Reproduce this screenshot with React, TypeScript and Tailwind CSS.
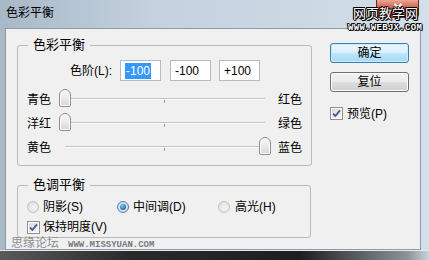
import React from "react";

const outline =
  "[text-shadow:1px_0_0_#000,-1px_0_0_#000,0_1px_0_#000,0_-1px_0_#000,1px_1px_0_#000,-1px_-1px_0_#000]";

function Slider({ left, right, end }: { left: string; right: string; end?: boolean }) {
  return (
    <div className="flex h-[24px] items-center">
      <span className="w-[24px] shrink-0 whitespace-nowrap text-[12px] leading-none">{left}</span>
      <div className="relative ml-[8px] h-[24px] w-[212px] shrink-0">
        <div className="absolute left-[6px] right-[6px] top-[10px] h-px bg-[#c4c4c4] shadow-[0_1px_0_#ffffff]" />
        <div className="absolute left-[105px] top-[12px] h-[3px] w-px bg-[#9c9c9c]" />
        <div
          className={`absolute top-[1px] h-[18px] w-[12px] rounded-t-[6px] rounded-b-[2px] border border-[#8e8f8f] bg-[linear-gradient(180deg,#fbfbfb,#e6e6e6_60%,#d6d6d6)] shadow-[inset_0_0_0_1px_#ffffff] ${
            end ? "right-0" : "left-0"
          }`}
        />
      </div>
      <span className="ml-[7px] shrink-0 whitespace-nowrap text-[12px] leading-none">{right}</span>
    </div>
  );
}

function Check() {
  return (
    <span className="flex h-[13px] w-[13px] shrink-0 items-center justify-center border border-[#8e8f8f] bg-white p-px">
      <span className="flex h-full w-full items-center justify-center bg-[linear-gradient(135deg,#d9dadb,#f6f6f6)]">
        <svg width="9" height="9" viewBox="0 0 9 9">
          <path d="M1 4.6 L3.4 7 L8 1.4" stroke="#3f5a8e" strokeWidth="1.8" fill="none" />
        </svg>
      </span>
    </span>
  );
}

function Radio({ on }: { on?: boolean }) {
  return (
    <span
      className={`flex h-[12px] w-[12px] shrink-0 items-center justify-center rounded-full border ${
        on
          ? "border-[#5a7fa6] bg-[radial-gradient(circle,#e6eef6,#c9d6e3)]"
          : "border-[#c2c2c2] bg-[radial-gradient(circle_at_60%_60%,#f4f4f4,#dadada)]"
      }`}
    >
      {on && (
        <span className="h-[6px] w-[6px] rounded-full bg-[radial-gradient(circle_at_40%_35%,#8fd0f4,#1f79b8_60%,#0d4e86)]" />
      )}
    </span>
  );
}

function Field({ value, selected }: { value: string; selected?: boolean }) {
  return (
    <div className="flex h-[21px] w-[41px] items-center border border-[#b5b9c1] bg-white pl-[4px] text-[12px] leading-none">
      {selected ? <span className="bg-[#3399ff] px-px py-[2px] text-white">{value}</span> : value}
    </div>
  );
}

export default function App() {
  return (
    <div className="relative h-[260px] w-[429px] overflow-hidden bg-[linear-gradient(90deg,#a9b8c7,#c3d1de_35%,#d3dfea)] font-['Liberation_Sans','Noto_Sans_CJK_SC',sans-serif] text-black">
      {/* title bar */}
      <div className="flex h-[28px] items-center pb-[2px] pl-[6px] text-[12px]">色彩平衡</div>

      {/* close button */}
      <div className="absolute right-[10px] top-0 flex h-[18px] w-[43px] items-start justify-center rounded-b-[4px] border border-t-0 border-[#6e2c22] bg-[linear-gradient(180deg,#e9a898,#cf5a44_50%,#b9301b)] pt-[3px]">
        <svg width="10" height="9" viewBox="0 0 10 9">
          <path d="M1.5 1 L8.5 8 M8.5 1 L1.5 8" stroke="#ffffff" strokeWidth="2.2" />
        </svg>
      </div>

      {/* client area */}
      <div className="ml-[5px] flex h-[222px] w-[416px] border border-[#8d9aa7] bg-[#f0f0f0]">
        <div className="pl-[11px] pt-[8px]">
          <fieldset className="w-[294px] rounded-[3px] border border-[#b9b9b9] px-[9px] pb-[5px]">
            <legend className="ml-px px-[5px] text-[13px] leading-[16px]">色彩平衡</legend>
            <div className="mt-[7px] flex items-center">
              <span className="w-[85px] whitespace-nowrap text-right text-[12px] leading-none">色阶(L):</span>
              <div className="ml-[8px]">
                <Field value="-100" selected />
              </div>
              <div className="ml-[9px]">
                <Field value="-100" />
              </div>
              <div className="ml-[8px]">
                <Field value="+100" />
              </div>
            </div>
            <div className="mt-[7px]">
              <Slider left="青色" right="红色" />
              <Slider left="洋红" right="绿色" />
              <Slider left="黄色" right="蓝色" end />
            </div>
          </fieldset>

          <fieldset className="mt-[11px] w-[294px] rounded-[3px] border border-[#b9b9b9] px-[9px] pb-px">
            <legend className="ml-px px-[5px] text-[13px] leading-[16px]">色调平衡</legend>
            <div className="mt-[5px] flex h-[18px] items-center whitespace-nowrap text-[12px] leading-none">
              <div className="flex w-[90px] items-center gap-[4px]">
                <Radio />
                <span>阴影(S)</span>
              </div>
              <div className="flex w-[101px] items-center gap-[4px]">
                <Radio on />
                <span>中间调(D)</span>
              </div>
              <div className="flex items-center gap-[5px]">
                <Radio />
                <span>高光(H)</span>
              </div>
            </div>
            <div className="mt-[2px] flex h-[18px] items-center gap-[3px] whitespace-nowrap text-[12px] leading-none">
              <Check />
              <span>保持明度(V)</span>
            </div>
          </fieldset>
        </div>

        <div className="ml-[18px] flex flex-col pt-[14px]">
          <button className="flex h-[20px] w-[79px] items-center justify-center rounded-[3px] border border-[#3c7fb1] bg-[linear-gradient(180deg,#eaf6fd,#d9f0fc_50%,#bee6fd_50%,#a7d9f5)] text-[12px] leading-none shadow-[inset_0_0_0_1px_#c8ecfc]">
            确定
          </button>
          <button className="mt-[9px] flex h-[20px] w-[79px] items-center justify-center rounded-[3px] border border-[#707070] bg-[linear-gradient(180deg,#f2f2f2,#ebebeb_50%,#dddddd_50%,#cfcfcf)] text-[12px] leading-none shadow-[inset_0_0_0_1px_#fcfcfc]">
            复位
          </button>
          <div className="mt-[15px] flex items-center gap-[4px] whitespace-nowrap text-[12px] leading-none">
            <Check />
            <span>预览(P)</span>
          </div>
        </div>
      </div>

      {/* bottom frame */}
      <div className="h-[10px] border-t border-[#e6ebf0] bg-[linear-gradient(90deg,#5a5a5a,#2a2a2a_30%,#1e1e1e_70%,#8e9399_95%,#c9d3dc)]" />

      {/* watermarks */}
      <div className={`absolute left-[353px] top-[7px] text-[13px] leading-[14px] text-white ${outline}`}>
        网页教学网
      </div>
      <div
        className={`absolute left-[348px] top-[23px] font-['Liberation_Mono',monospace] text-[9px] font-bold leading-[10px] tracking-[0.3px] text-white ${outline}`}
      >
        WWW.WEBJX.COM
      </div>
      <div className="absolute left-[11px] top-[236px] text-[12px] leading-[14px] text-[#8f8f8f]">思缘论坛</div>
      <div className="absolute left-[68px] top-[241px] font-['Liberation_Mono',monospace] text-[9px] font-bold leading-[9px] text-[#7a7a7a]">
        WWW.MISSYUAN.COM
      </div>
    </div>
  );
}
